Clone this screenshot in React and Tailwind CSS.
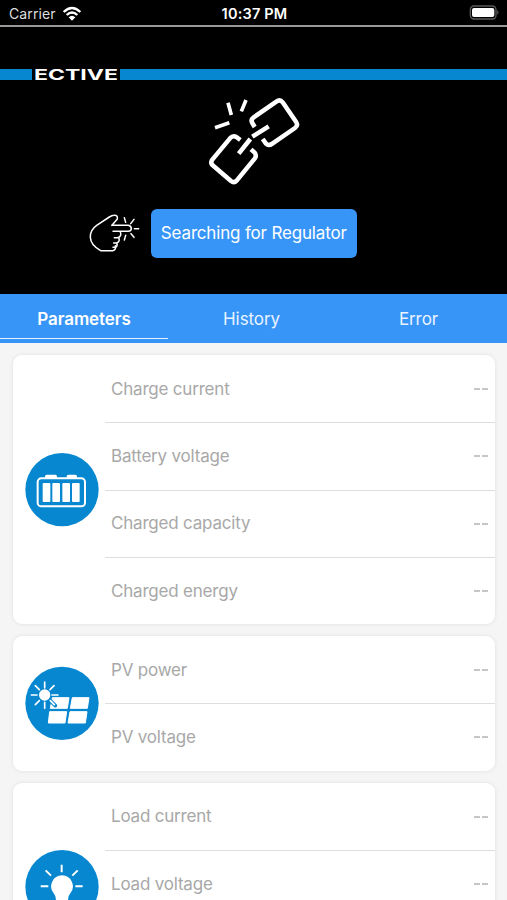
import React from "react";

function WifiIcon() {
  return (
    <svg className="h-4 w-5" viewBox="0 0 60 48" fill="none" stroke="#fff" strokeWidth="7">
      <path d="M5 18Q30 -6 55 18" />
      <path d="M14 27Q30 12 46 27" />
      <path d="M30 44L20 34Q30 25 40 34Z" fill="#fff" stroke="none" />
    </svg>
  );
}

function BatteryStatusIcon() {
  return (
    <svg className="h-[15px] w-[31px]" viewBox="0 0 93 45">
      <rect x="4" y="3" width="77" height="39" rx="11" fill="none" stroke="#5a5a5a" strokeWidth="4" />
      <rect x="9" y="9" width="67" height="27" rx="6" fill="#fff" />
      <path d="M85 15Q92 22 85 29Z" fill="#6a6a6a" />
    </svg>
  );
}

function BrokenLinkIcon() {
  return (
    <svg className="h-[110px] w-[130px]" viewBox="0 0 390 330" fill="none" stroke="#fff" strokeWidth="13.5" strokeLinejoin="round">
      <path d="M194 126L187 114Q181 104 191 97L259 50Q270 42 278 52L319 112Q325 122 315 129L247 176Q236 184 228 176L218 162" />
      <path d="M151 165L139 156Q129 150 120 160L67 224Q60 233 68 241L123 288Q132 295 140 287L194 221Q201 212 194 203L183 193" />
      <path d="M187 155L236 124M146 206L181 162" strokeWidth="13.5" />
      <path d="M114 53L124 90M168 45L154 79M75 128L118 113" strokeWidth="11" />
    </svg>
  );
}

function PointingHandIcon() {
  return (
    <svg className="h-[65px] w-[62px]" viewBox="0 0 186 195" fill="none" stroke="#fff" strokeWidth="4.5" strokeLinecap="round" strokeLinejoin="round">
      <path d="M96 76L112 57Q114 45 102 46Q96 46 88 51L50 76Q30 90 31 112Q32 136 62 152H98Q109 150 106 137" />
      <path d="M96 76H145Q154 78 154 86Q153 94 145 94H99" />
      <path d="M121 95Q126 110 113 113H103M117 114Q120 127 109 129H101M111 130Q113 139 106 142H99" />
      <path d="M133 53L137 67M162 58L152 71M163 86H176M153 101L162 112M137 106L133 120" />
    </svg>
  );
}

function BatteryIcon() {
  return (
    <svg className="size-[100px]" viewBox="1 0 300 300">
      <circle cx="142" cy="149" r="110" fill="#0787d0" />
      <path d="M91 114V109Q91 104 96 104H122Q127 104 127 109V114M156 114V109Q156 104 161 104H182Q187 104 187 109V114" fill="#fff" />
      <rect x="69" y="115" width="142" height="84" rx="11" fill="none" stroke="#fff" strokeWidth="6" />
      <g fill="#fff">
        <rect x="84" y="129" width="23" height="57" rx="3" />
        <rect x="113" y="129" width="23" height="57" rx="3" />
        <rect x="143" y="129" width="23" height="57" rx="3" />
        <rect x="172" y="129" width="23" height="57" rx="3" />
      </g>
    </svg>
  );
}

function SolarIcon() {
  return (
    <svg className="size-[100px]" viewBox="1 -6 300 300">
      <circle cx="142" cy="145" r="110" fill="#0787d0" />
      <g fill="#fff" stroke="#fff" strokeWidth="3" strokeLinejoin="round">
        <path d="M113 128H163L158 160H107ZM173 128H223L218 160H167ZM105 170H156L151 204H101ZM166 170H217L212 204H160Z" />
      </g>
      <circle cx="90" cy="120" r="21" fill="#0787d0" />
      <path d="M106 136L122 152" stroke="#0787d0" strokeWidth="11" strokeLinecap="round" />
      <path d="M108 121H130" stroke="#0787d0" strokeWidth="10" />
      <circle cx="90" cy="120" r="17" fill="#fff" />
      <path d="M90 81V99M90 142V160M50 120H67M112 120H130M62 92L74 104M118 92L106 104M62 149L74 137M107 137L119 149" stroke="#fff" strokeWidth="5" strokeLinecap="round" />
    </svg>
  );
}

function BulbIcon() {
  return (
    <svg className="size-[100px]" viewBox="1 72 300 300">
      <circle cx="142" cy="230" r="110" fill="#0787d0" />
      <path d="M142 196A33 33 0 0 0 117 250Q124 257 124 272H160Q160 257 167 250A33 33 0 0 0 142 196Z" fill="#fff" />
      <path d="M141 164V187M93 181L109 197M189 181L173 197M78 229H101M182 229H204" stroke="#fff" strokeWidth="6" />
    </svg>
  );
}

function Card({ icon, rows, className = "" }) {
  return (
    <section className={`flex overflow-hidden rounded-[9px] bg-white shadow-[0_0_4px_rgba(0,0,0,0.09)] ${className}`}>
      <div className="flex w-[92px] shrink-0 items-center">
        <div className="ml-0.5 w-[90px] [&>svg]:max-w-none">{icon}</div>
      </div>
      <div className="flex-1">
        {rows.map((label) => (
          <div key={label} className="flex h-[67.25px] items-center justify-between border-t border-[#dedede] pr-[7px] pl-1.5 text-[17px] tracking-[-0.2px] text-[#a8a8a8] first:border-transparent">
            <span className="pt-px">{label}</span>
            <svg className="h-0.5 w-3.5" viewBox="0 0 14 2">
              <path d="M0 1H6M8 1H14" stroke="#b4b4b4" strokeWidth="1.6" />
            </svg>
          </div>
        ))}
      </div>
    </section>
  );
}

export default function App() {
  return (
    <div className="h-[900px] w-[507px] overflow-hidden bg-[#f5f5f5] font-['Inter',sans-serif]">
      <header className="h-[294px] bg-black text-white">
        <div className="grid h-[27px] grid-cols-3 items-center border-b-2 border-[#999] pr-[7px] pl-[9px] text-[14px]">
          <div className="flex items-center gap-1.5 pt-0.5 text-[#dedede]">
            <span className="tracking-[0.1px]">Carrier</span>
            <WifiIcon />
          </div>
          <span className="pt-0.5 text-center text-[14.5px] font-semibold tracking-[0.2px]">10:37 PM</span>
          <div className="flex justify-end">
            <BatteryStatusIcon />
          </div>
        </div>
        <div className="flex h-[53px] items-end">
          <div className="h-[11.5px] w-8 bg-[#0787d0]" />
          <svg className="h-[22px] w-[88px] overflow-visible" viewBox="0 0 88 22">
            <text x="2" y="21.8" textLength="84" lengthAdjust="spacingAndGlyphs" fill="#fff" fontFamily="Inter, sans-serif" fontWeight="700" fontSize="15">ECTIVE</text>
          </svg>
          <div className="h-[11.5px] flex-1 bg-[#0787d0]" />
        </div>
        <div className="mt-[5px] ml-[190px]">
          <BrokenLinkIcon />
        </div>
        <div className="mt-[5px] flex items-center pl-20">
          <PointingHandIcon />
          <button className="mt-px ml-[9px] h-[49px] w-[205.5px] rounded-[6px] bg-[#3895f8] pt-0.5 text-[17px] tracking-[-0.17px] whitespace-nowrap">
            Searching for Regulator
          </button>
        </div>
      </header>

      <nav className="grid h-[49px] grid-cols-[168px_167px_167px] bg-[#3895f8] text-center text-[17px] leading-[51px] tracking-[-0.1px] text-[#e8f3ff]">
        <div className="relative h-[49px] font-semibold text-white">
          Parameters
          <div className="absolute bottom-[4px] left-0 h-[1.5px] w-[168px] bg-[#e8f3ff]" />
        </div>
        <div>History</div>
        <div>Error</div>
      </nav>

      <main className="flex flex-col gap-3 py-3 pr-3 pl-[13px]">
        <Card
          icon={<BatteryIcon />}
          rows={["Charge current", "Battery voltage", "Charged capacity", "Charged energy"]}
        />
        <Card icon={<SolarIcon />} rows={["PV power", "PV voltage"]} />
        <Card icon={<BulbIcon />} rows={["Load current", "Load voltage"]} className="h-[202px]" />
      </main>
    </div>
  );
}
